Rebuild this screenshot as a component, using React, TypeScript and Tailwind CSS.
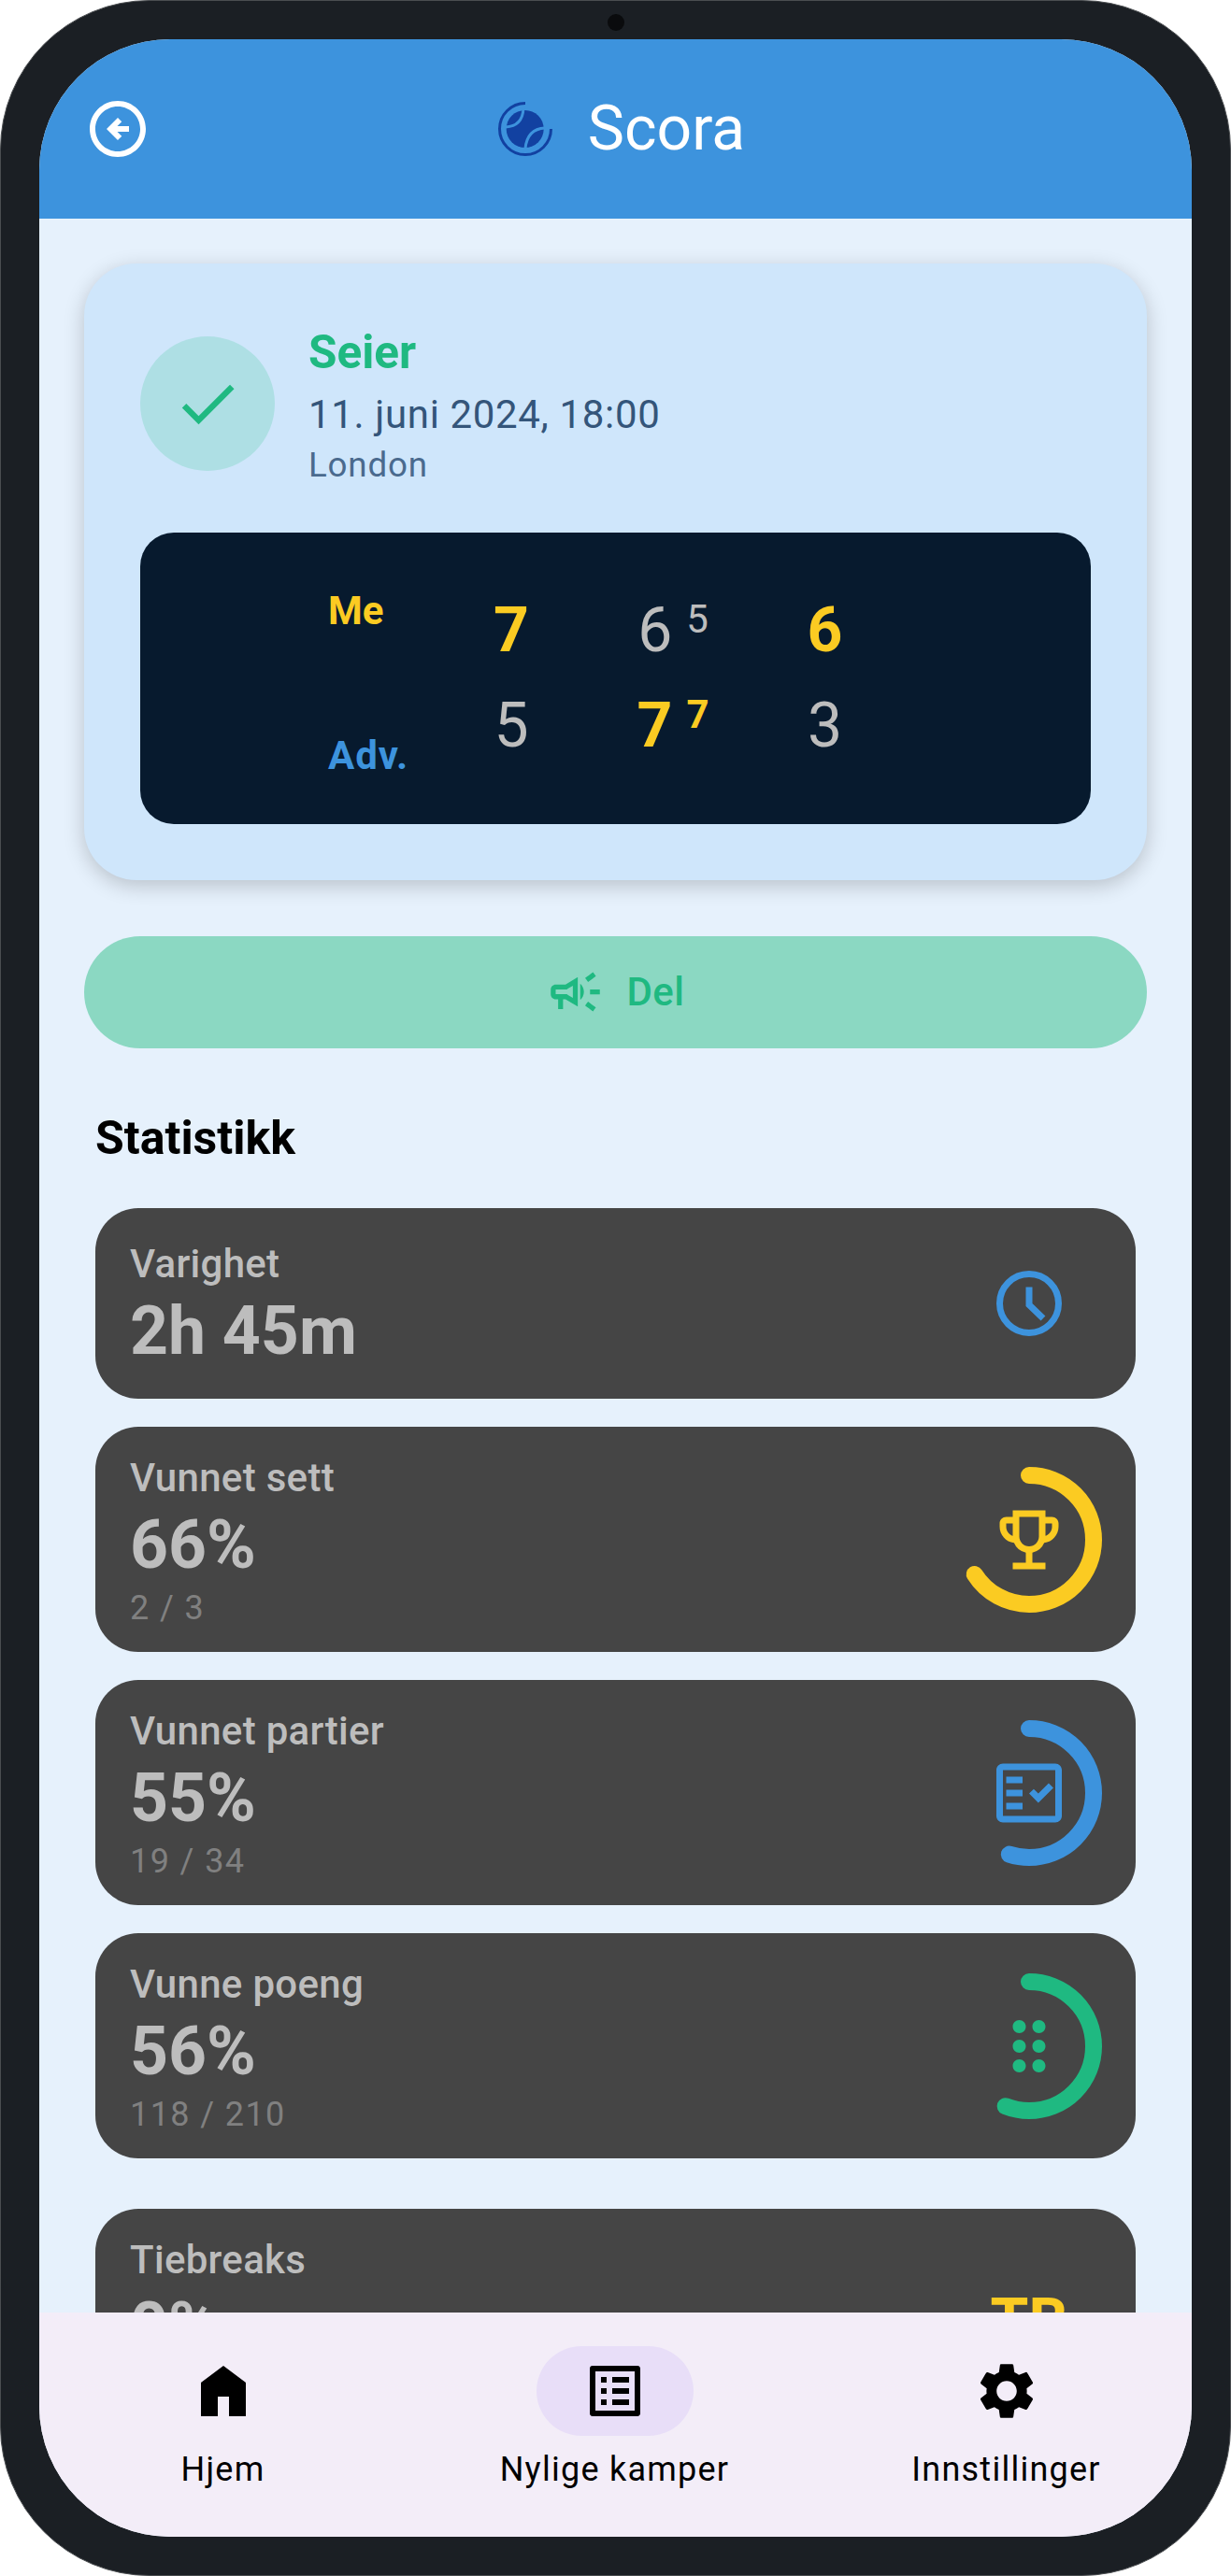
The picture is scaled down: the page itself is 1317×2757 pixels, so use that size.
import type { ReactNode } from "react";
import {
  MdCheck,
  MdDragIndicator,
  MdOutlineArrowCircleLeft,
  MdOutlineCampaign,
  MdOutlineEmojiEvents,
  MdOutlineFactCheck,
  MdOutlineListAlt,
  MdSettings,
} from "react-icons/md";

function Logo() {
  return (
    <svg width="64" height="66" viewBox="50 45 64 66" className="shrink-0">
      <circle cx="81.7" cy="78" r="20" fill="#1241a1" />
      <path d="M80 56 Q79 75 61 76" fill="none" stroke="#3d93dd" strokeWidth="3" />
      <path d="M103 77 Q84 78 82 99" fill="none" stroke="#3d93dd" strokeWidth="3" />
      <path d="M82 50.5 A27.5 27.5 0 1 0 109.5 78" fill="none" stroke="#1241a1" strokeWidth="3" />
    </svg>
  );
}

function ClockIcon() {
  return (
    <svg width="70" height="70" viewBox="0 0 70 70" fill="none" stroke="#3d93dd" strokeWidth="7">
      <circle cx="35" cy="35" r="31.5" />
      <path d="M35 17.5 V36.5 L50 51" />
    </svg>
  );
}

function HomeIcon() {
  return (
    <svg width="72" height="72" viewBox="0 0 24 24" fill="#000">
      <path d="M4 21V9l8-6 8 6v12h-6v-7h-4v7z" />
    </svg>
  );
}

function Ring({ pct, color, children }: { pct: number; color: string; children: ReactNode }) {
  return (
    <div className="relative flex h-[156px] w-[156px] shrink-0 items-center justify-center">
      <svg width="156" height="156" viewBox="0 0 156 156" className="absolute inset-0 -rotate-90">
        <circle
          cx="78"
          cy="78"
          r="69"
          fill="none"
          stroke={color}
          strokeWidth="18"
          strokeLinecap="round"
          pathLength={100}
          strokeDasharray={`${pct} 100`}
        />
      </svg>
      {children}
    </div>
  );
}

function StatCard({
  label,
  value,
  sub,
  children,
}: {
  label: string;
  value: string;
  sub?: string;
  children: ReactNode;
}) {
  return (
    <div
      className={`flex shrink-0 items-center justify-between rounded-[46px] bg-[#454545] pl-[37px] pr-[36px] ${
        sub ? "h-[241px]" : "h-[204px]"
      }`}
    >
      <div className={sub ? "pt-[3px]" : "pt-[6px]"}>
        <div className="text-[42px] font-medium leading-[49px] tracking-[0.3px] text-[#bdbdbd]">{label}</div>
        <div className="mt-[5px] text-[71.5px] font-bold leading-[86px] text-[#bdbdbd]">{value}</div>
        {sub && <div className="mt-[3px] text-[36px] leading-[42px] tracking-[1.4px] text-[#808080]">{sub}</div>}
      </div>
      {children}
    </div>
  );
}

function ScoreCell({
  main,
  tie,
  win,
  width,
}: {
  main: number;
  tie?: number;
  win?: boolean;
  width: string;
}) {
  return (
    <div className={`flex justify-center ${width}`}>
      <span
        className={`text-[66px] leading-[102px] ${win ? "font-bold text-[#fbcb22]" : "font-normal text-[#bdbdbd]"}`}
      >
        {main}
      </span>
      {tie !== undefined && (
        <span
          className={`ml-[15px] mt-[14px] text-[42px] leading-[50px] ${
            win ? "font-bold text-[#fbcb22]" : "font-normal text-[#bdbdbd]"
          }`}
        >
          {tie}
        </span>
      )}
    </div>
  );
}

function NavItem({ label, active, children }: { label: string; active?: boolean; children: ReactNode }) {
  return (
    <div className="flex w-[419px] shrink-0 flex-col items-center">
      <div
        className={`flex h-[96px] w-[168px] items-center justify-center rounded-full ${
          active ? "bg-[#e8def8]" : ""
        }`}
      >
        {children}
      </div>
      <div className="mt-[14px] whitespace-nowrap text-[36px] font-[450] leading-[44px] tracking-[1.25px] text-black">
        {label}
      </div>
    </div>
  );
}

export default function App() {
  return (
    <div className="h-[2757px] w-[1317px] bg-white font-['Roboto',sans-serif]">
      <div className="relative h-full w-full rounded-[160px] border border-[#4a4d50] bg-[#1b1f24] p-[41px]">
        <div className="absolute left-[649px] top-[14px] h-[18px] w-[18px] rounded-full bg-[#0a0b0d]" />

        <div className="flex h-full flex-col overflow-hidden rounded-[140px] bg-[#e6f1fc]">
          <header className="flex h-[192px] shrink-0 items-center bg-[#3d93dd] px-[48px]">
            <MdOutlineArrowCircleLeft size={72} color="#fff" className="shrink-0" />
            <div className="flex flex-1 items-center justify-center gap-[35px] pl-[10px]">
              <Logo />
              <span className="text-[66px] leading-[74px] text-white">Scora</span>
            </div>
            <div className="w-[72px] shrink-0" />
          </header>

          <main className="flex min-h-0 flex-1 flex-col overflow-hidden">
            <div className="mx-[48px] mt-[48px] shrink-0 rounded-[56px] bg-[#cfe6fb] px-[60px] pb-[60px] pt-[67px] shadow-[0_6px_22px_rgba(0,0,0,0.2)]">
              <div className="flex items-start">
                <div className="mt-[11px] flex h-[144px] w-[144px] shrink-0 items-center justify-center rounded-full bg-[#aedfe4]">
                  <MdCheck size={76} color="#1fb981" />
                </div>
                <div className="ml-[36px]">
                  <div className="pt-[1px] text-[49.5px] font-bold leading-[55px] text-[#1fb981]">Seier</div>
                  <div className="mt-[14px] text-[42px] leading-[49px] tracking-[0.65px] text-[#34557a]">
                    11. juni 2024, 18:00
                  </div>
                  <div className="mt-[8px] text-[36.75px] leading-[43px] tracking-[0.8px] text-[#4a6a8e]">London</div>
                </div>
              </div>

              <div className="mt-[51px] flex h-[312px] rounded-[36px] bg-[#071a2e] pl-[201px]">
                <div className="w-[111px] shrink-0 pt-[59px]">
                  <div className="text-[42px] font-bold leading-[50px] text-[#fbcb22]">Me</div>
                  <div className="mt-[105px] text-[42px] font-bold leading-[50px] tracking-[1px] text-[#3d93dd]">
                    Adv.
                  </div>
                </div>
                <div className="pt-[54px]">
                  <div className="flex">
                    <ScoreCell main={7} win width="w-[170px]" />
                    <ScoreCell main={6} tie={5} width="w-[176px]" />
                    <ScoreCell main={6} win width="w-[149px]" />
                  </div>
                  <div className="flex">
                    <ScoreCell main={5} width="w-[170px]" />
                    <ScoreCell main={7} tie={7} win width="w-[176px]" />
                    <ScoreCell main={3} width="w-[149px]" />
                  </div>
                </div>
              </div>
            </div>

            <button
              type="button"
              className="mx-[48px] mt-[60px] flex h-[120px] shrink-0 items-center justify-center gap-[23px] rounded-full bg-[#8bd8c2] pb-[2px] text-[42px] font-medium tracking-[0.5px] text-[#1fb981]"
            >
              <MdOutlineCampaign size={63} color="#1fb981" />
              <span>Del</span>
            </button>

            <h2 className="ml-[60px] mt-[68px] shrink-0 text-[50px] font-bold leading-[56px] text-black">Statistikk</h2>

            <div className="mx-[60px] mt-[47px] flex flex-col gap-[30px]">
              <StatCard label="Varighet" value="2h 45m">
                <div className="flex w-[156px] justify-center">
                  <ClockIcon />
                </div>
              </StatCard>
              <StatCard label="Vunnet sett" value="66%" sub="2 / 3">
                <Ring pct={66} color="#fbcb22">
                  <MdOutlineEmojiEvents size={84} color="#fbcb22" />
                </Ring>
              </StatCard>
              <StatCard label="Vunnet partier" value="55%" sub="19 / 34">
                <Ring pct={55} color="#3d93dd">
                  <MdOutlineFactCheck size={84} color="#3d93dd" />
                </Ring>
              </StatCard>
              <StatCard label="Vunne poeng" value="56%" sub="118 / 210">
                <Ring pct={56} color="#1fb981">
                  <MdDragIndicator size={84} color="#1fb981" />
                </Ring>
              </StatCard>
              <div className="mt-[24px]">
                <StatCard label="Tiebreaks" value="0%" sub="0 / 1">
                  <div className="flex w-[156px] justify-center text-[66px] font-bold leading-[78px] text-[#fbcb22]">
                    TB
                  </div>
                </StatCard>
              </div>
            </div>
          </main>

          <nav className="flex h-[240px] shrink-0 justify-center bg-[#f3edf8] pr-[2px] pt-[36px]">
            <NavItem label="Hjem">
              <HomeIcon />
            </NavItem>
            <NavItem label="Nylige kamper" active>
              <MdOutlineListAlt size={72} color="#000" />
            </NavItem>
            <NavItem label="Innstillinger">
              <MdSettings size={72} color="#000" />
            </NavItem>
          </nav>
        </div>
      </div>
    </div>
  );
}
